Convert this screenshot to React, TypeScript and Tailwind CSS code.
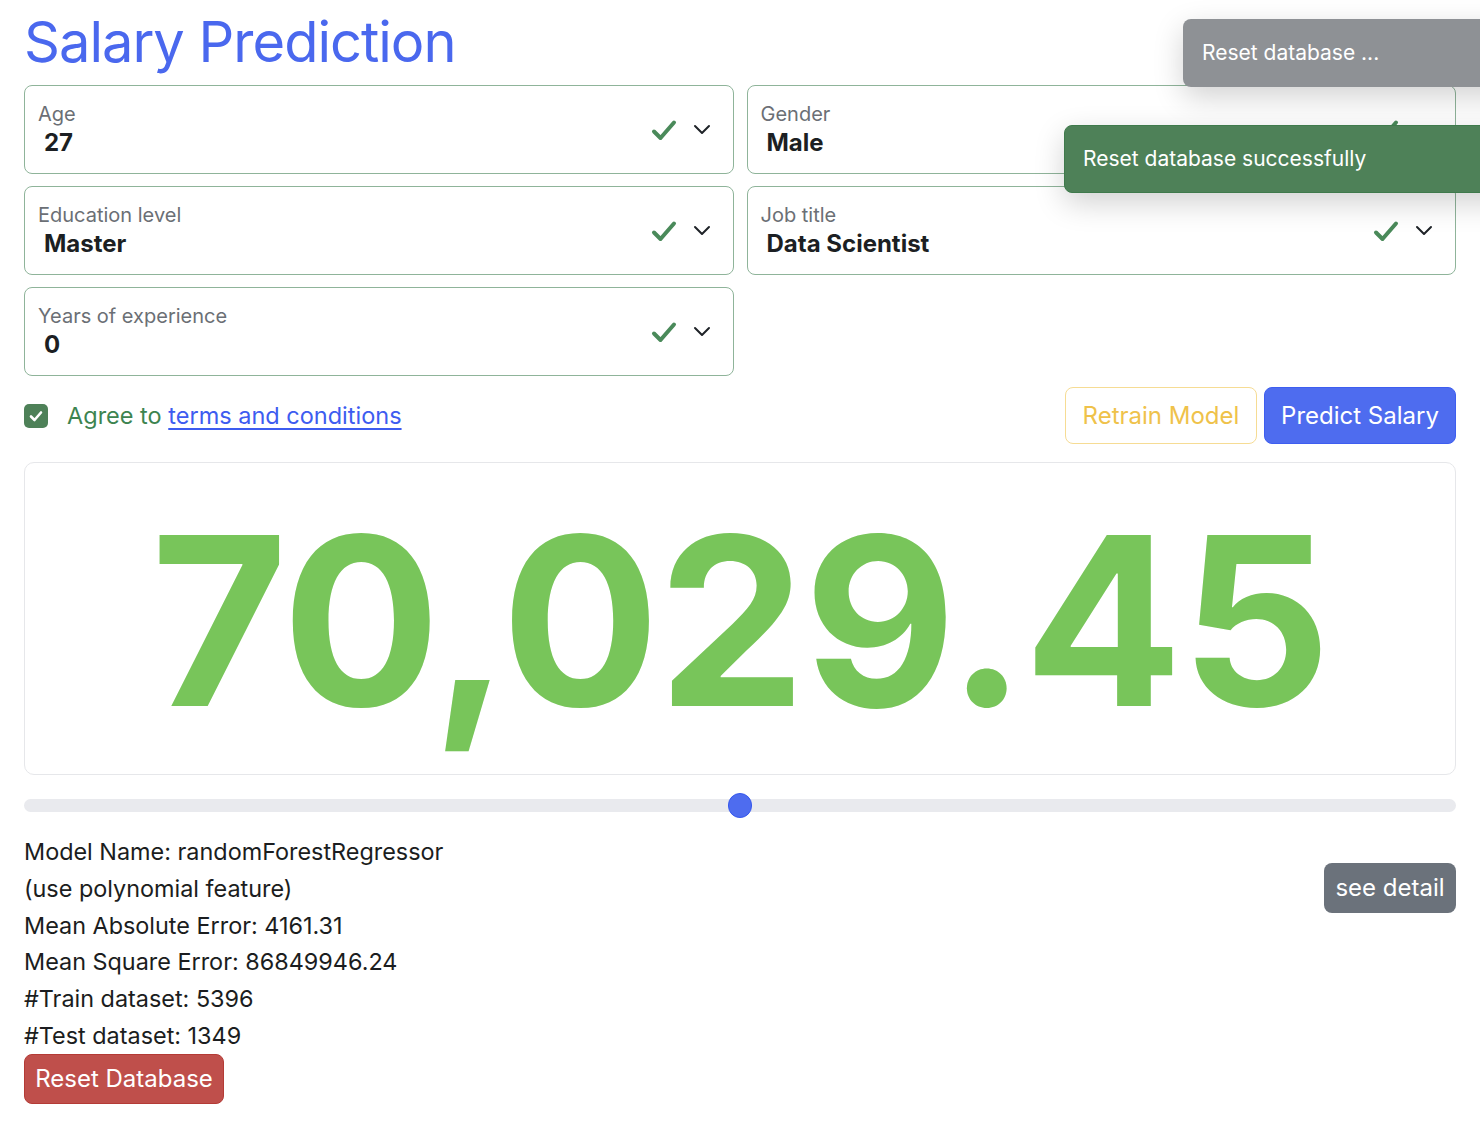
import React from "react";

function CheckMark() {
  return (
    <svg width="26" height="22" viewBox="0 0 26 22" fill="none">
      <path
        d="M3 12.5 L9.5 19 L23 3.5"
        stroke="#4a8a5a"
        strokeWidth="4"
        strokeLinecap="round"
        strokeLinejoin="round"
      />
    </svg>
  );
}

function Chevron() {
  return (
    <svg width="18" height="11" viewBox="0 0 18 11" fill="none">
      <path
        d="M2 2 L9 9 L16 2"
        stroke="#1f2328"
        strokeWidth="2"
        strokeLinecap="round"
        strokeLinejoin="round"
      />
    </svg>
  );
}

function Field({ label, value }: { label: string; value: string }) {
  return (
    <div className="flex h-[89px] items-center justify-between rounded-[8px] border border-[#8fb49a] bg-white pl-[13px] pr-[22px]">
      <div className="flex flex-col">
        <span className="text-[20px] leading-[26px] text-[#6b6f75]">{label}</span>
        <span className="pl-[6px] text-[24px] font-bold leading-[32px] text-[#1c1f23]">{value}</span>
      </div>
      <div className="flex items-center gap-[16px]">
        <CheckMark />
        <Chevron />
      </div>
    </div>
  );
}

const stats = [
  "Model Name: randomForestRegressor",
  "(use polynomial feature)",
  "Mean Absolute Error: 4161.31",
  "Mean Square Error: 86849946.24",
  "#Train dataset: 5396",
  "#Test dataset: 1349",
];

export default function App() {
  return (
    <div className="relative min-h-screen overflow-hidden bg-white px-6 font-['Inter',sans-serif]">
      <h1 className="pt-[6px] text-[56px] leading-[72px] tracking-[-1px] text-[#4a68ee]">
        Salary Prediction
      </h1>

      {/* Form fields */}
      <div className="mt-[7px] grid grid-cols-2 gap-x-[13px] gap-y-[12px]">
        <Field label="Age" value="27" />
        <Field label="Gender" value="Male" />
        <Field label="Education level" value="Master" />
        <Field label="Job title" value="Data Scientist" />
        <Field label="Years of experience" value="0" />
      </div>

      {/* Agree + actions */}
      <div className="mt-[11px] flex items-center justify-between">
        <label className="flex items-center gap-[19px] text-[23.5px] text-[#3d8450]">
          <span className="flex h-[24px] w-[24px] items-center justify-center rounded-[5px] bg-[#4e8158]">
            <svg width="14" height="12" viewBox="0 0 14 12" fill="none">
              <path d="M2 6.5 L5.5 10 L12 2.5" stroke="white" strokeWidth="2.6" strokeLinecap="round" strokeLinejoin="round" />
            </svg>
          </span>
          <span>
            Agree to{" "}
            <a href="#" className="text-[#3d5cf0] underline decoration-[1.5px] underline-offset-[4px]">
              terms and conditions
            </a>
          </span>
        </label>
        <div className="flex gap-[7px]">
          <button className="h-[57px] w-[192px] rounded-[8px] border border-[#f6dc94] bg-white text-[24px] text-[#efc24a]">
            Retrain Model
          </button>
          <button className="h-[57px] w-[192px] rounded-[8px] border border-[#3e5ef0] bg-[#4e6cef] text-[24px] text-white">
            Predict Salary
          </button>
        </div>
      </div>

      {/* Result */}
      <div className="mt-[18px] flex h-[313px] items-center justify-center rounded-[10px] border border-[#e6e7ea]">
        <span className="pt-[4px] text-[235px] font-bold leading-none tracking-[-2px] text-[#78c55a]">
          70,029.45
        </span>
      </div>

      {/* Slider */}
      <div className="relative mt-[24px] h-[13px] rounded-full bg-[#e9eaee]">
        <div className="absolute left-[704px] top-[-6px] h-[25px] w-[24px] rounded-full border border-[#3658ee] bg-[#4e6cef]" />
      </div>

      {/* Model info */}
      <div className="mt-[22px] flex items-start justify-between">
        <div className="flex flex-col">
          {stats.map((s) => (
            <div key={s} className="text-[23.4px] leading-[36.8px] text-[#1b1d20]">
              {s}
            </div>
          ))}
          <button className="mt-[-1px] h-[50px] w-[200px] rounded-[8px] border border-[#b43b36] bg-[#bf4f4b] text-[24px] text-white">
            Reset Database
          </button>
        </div>
        <button className="mt-[29px] h-[50px] w-[132px] rounded-[8px] bg-[#6b727b] text-[24px] text-white">
          see detail
        </button>
      </div>

      <div className="h-[20px]" />

      {/* Toasts */}
      <div className="absolute left-[1183px] top-[19px] flex h-[68px] w-[400px] items-center rounded-[8px] bg-[#8e9195] pl-[19px] text-[21px] text-white shadow-[0_10px_30px_rgba(0,0,0,0.18)]">
        Reset database ...
      </div>
      <div className="absolute left-[1064px] top-[125px] flex h-[68px] w-[500px] items-center rounded-[8px] border border-[#3f7a4c] bg-[#4e8158] pl-[18px] text-[21px] text-white shadow-[0_10px_30px_rgba(0,0,0,0.18)]">
        Reset database successfully
      </div>
    </div>
  );
}
